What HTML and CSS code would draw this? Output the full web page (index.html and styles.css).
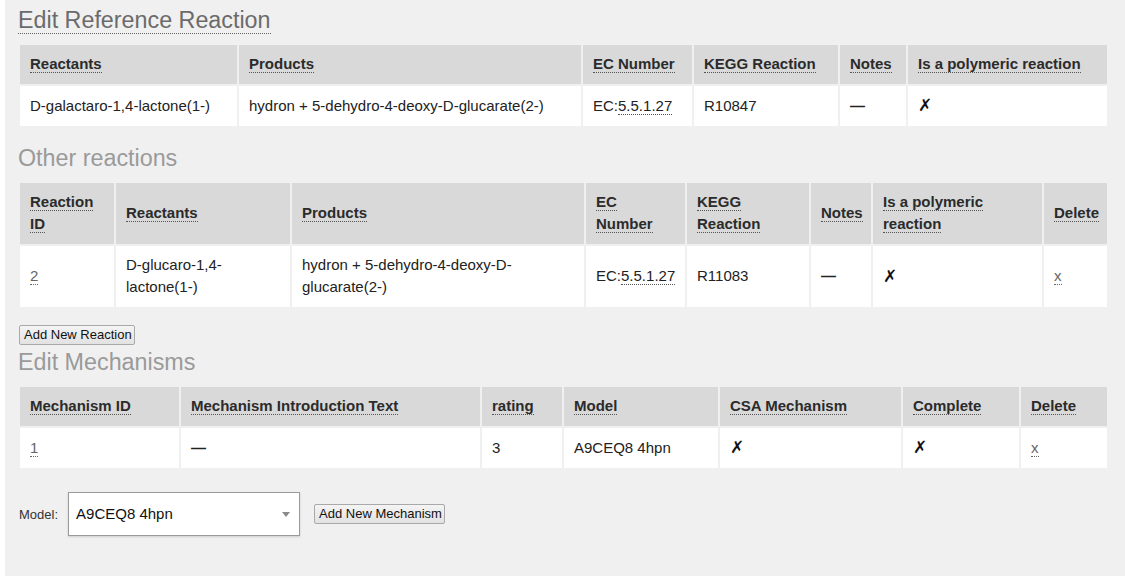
FILE: index.html
```html
<!DOCTYPE html>
<html>
<head>
<meta charset="utf-8">
<link rel="stylesheet" href="styles.css">
</head>
<body>
<div class="panel">
  <h2 class="heading first"><span class="dotted-title">Edit Reference Reaction</span></h2>
  <table class="grid t1">
    <thead>
      <tr>
        <th class="c1"><span class="abbr">Reactants</span></th>
        <th class="c2"><span class="abbr">Products</span></th>
        <th class="c3"><span class="abbr">EC Number</span></th>
        <th class="c4"><span class="abbr">KEGG Reaction</span></th>
        <th class="c5"><span class="abbr">Notes</span></th>
        <th class="c6"><span class="abbr">Is a polymeric reaction</span></th>
      </tr>
    </thead>
    <tbody>
      <tr>
        <td>D-galactaro-1,4-lactone(1-)</td>
        <td>hydron + 5-dehydro-4-deoxy-D-glucarate(2-)</td>
        <td>EC:<span class="abbr">5.5.1.27</span></td>
        <td>R10847</td>
        <td><span class="dash">—</span></td>
        <td><span class="cross">✗</span></td>
      </tr>
    </tbody>
  </table>

  <h2 class="heading">Other reactions</h2>
  <table class="grid t2">
    <thead>
      <tr>
        <th class="c1"><span class="abbr">Reaction ID</span></th>
        <th class="c2"><span class="abbr">Reactants</span></th>
        <th class="c3"><span class="abbr">Products</span></th>
        <th class="c4"><span class="abbr">EC Number</span></th>
        <th class="c5"><span class="abbr">KEGG Reaction</span></th>
        <th class="c6"><span class="abbr">Notes</span></th>
        <th class="c7"><span class="abbr">Is a polymeric reaction</span></th>
        <th class="c8"><span class="abbr">Delete</span></th>
      </tr>
    </thead>
    <tbody>
      <tr>
        <td><a class="link" href="#">2</a></td>
        <td>D-glucaro-1,4-lactone(1-)</td>
        <td>hydron + 5-dehydro-4-deoxy-D-glucarate(2-)</td>
        <td>EC:<span class="abbr">5.5.1.27</span></td>
        <td>R11083</td>
        <td><span class="dash">—</span></td>
        <td><span class="cross">✗</span></td>
        <td><a class="link" href="#">x</a></td>
      </tr>
    </tbody>
  </table>

  <button class="btn btn-reaction">Add New Reaction</button>

  <h2 class="heading after-button">Edit Mechanisms</h2>
  <table class="grid t3">
    <thead>
      <tr>
        <th class="c1"><span class="abbr">Mechanism ID</span></th>
        <th class="c2"><span class="abbr">Mechanism Introduction Text</span></th>
        <th class="c3"><span class="abbr">rating</span></th>
        <th class="c4"><span class="abbr">Model</span></th>
        <th class="c5"><span class="abbr">CSA Mechanism</span></th>
        <th class="c6"><span class="abbr">Complete</span></th>
        <th class="c7"><span class="abbr">Delete</span></th>
      </tr>
    </thead>
    <tbody>
      <tr>
        <td><a class="link" href="#">1</a></td>
        <td><span class="dash">—</span></td>
        <td>3</td>
        <td>A9CEQ8 4hpn</td>
        <td><span class="cross">✗</span></td>
        <td><span class="cross">✗</span></td>
        <td><a class="link" href="#">x</a></td>
      </tr>
    </tbody>
  </table>

  <div class="model-row">
    <label class="model-label">Model:</label>
    <div class="select">
      <span class="select-value">A9CEQ8 4hpn</span>
      <svg class="select-arrow" width="8" height="5" viewBox="0 0 8 5"><path d="M0 0 L8 0 L4 5 Z" fill="#8a8a8a"/></svg>
    </div>
    <button class="btn btn-mech">Add New Mechanism</button>
  </div>
</div>
</body>
</html>
```

FILE: styles.css
```css
* {
  box-sizing: border-box;
}

html, body {
  margin: 0;
  padding: 0;
  background: #ffffff;
}

body {
  font-family: "Liberation Sans", Arial, sans-serif;
  font-size: 15px;
  color: #222;
  width: 1125px;
  height: 583px;
  overflow: hidden;
}

.panel {
  margin-left: 5px;
  height: 576px;
  background: #f0f0f0;
  padding: 5px 16px 0 13px;
}

.heading {
  margin: 15px 0 8px 0;
  font-weight: normal;
  font-size: 23.3px;
  line-height: 30px;
  height: 30px;
  color: #9a9a9a;
  white-space: nowrap;
}

.heading.first {
  margin-top: 0;
  color: #6b6b6b;
}

.heading.after-button {
  margin-top: 2px;
}

.dotted-title {
  border-bottom: 1px dotted #666;
}

.grid {
  border-collapse: separate;
  border-spacing: 2px;
  table-layout: fixed;
  width: 1091px;
}

.grid th,
.grid td {
  text-align: left;
  vertical-align: middle;
  padding: 8px 10px 9px 10px;
  line-height: 22px;
}

.grid th {
  background: #d9d9d9;
  font-weight: bold;
  color: #2b2b2b;
}

.grid td {
  background: #ffffff;
  color: #222;
}

.abbr {
  border-bottom: 1px dotted #555;
}

.link {
  color: #666;
  text-decoration: none;
  border-bottom: 1px dotted #666;
}

.dash {
  font-weight: bold;
}

.cross {
  font-family: "DejaVu Sans", sans-serif;
  font-weight: bold;
  font-size: 17px;
  color: #111;
}

/* table 1 column widths */
.t1 .c1 { width: 217px; }
.t1 .c2 { width: 342px; }
.t1 .c3 { width: 109px; }
.t1 .c4 { width: 144px; }
.t1 .c5 { width: 66px; }
.t1 .c6 { width: 199px; }

/* table 2 column widths */
.t2 .c1 { width: 94px; }
.t2 .c2 { width: 174px; }
.t2 .c3 { width: 292px; }
.t2 .c4 { width: 99px; }
.t2 .c5 { width: 122px; }
.t2 .c6 { width: 60px; }
.t2 .c7 { width: 169px; }
.t2 .c8 { width: 63px; }

/* table 3 column widths */
.t3 .c1 { width: 159px; }
.t3 .c2 { width: 299px; }
.t3 .c3 { width: 80px; }
.t3 .c4 { width: 154px; }
.t3 .c5 { width: 181px; }
.t3 .c6 { width: 116px; }
.t3 .c7 { width: 86px; }

.btn {
  font-family: "Liberation Sans", Arial, sans-serif;
  font-size: 13px;
  color: #111;
  background: linear-gradient(#f4f4f4, #e2e2e2);
  border: 1px solid #a9a9a9;
  border-radius: 2px;
  height: 20px;
  line-height: 16px;
  padding: 0 4px;
  margin: 0;
  white-space: nowrap;
}

.btn-reaction {
  display: block;
  margin-top: 16px;
  margin-left: 1px;
  width: 116px;
}

.model-row {
  display: flex;
  align-items: center;
  margin-top: 22px;
  margin-left: 1px;
}

.model-label {
  font-size: 13px;
  color: #333;
  margin-right: 10px;
}

.select {
  width: 232px;
  height: 44px;
  background: #fff;
  border: 1px solid #9a9a9a;
  box-shadow: 0 1px 2px rgba(0,0,0,0.15);
  display: flex;
  align-items: center;
  justify-content: space-between;
  padding: 0 9px 0 7px;
  font-size: 15px;
  color: #111;
}

.select-value {
  line-height: 20px;
}

.btn-mech {
  margin-left: 14px;
  width: 131px;
}
```
